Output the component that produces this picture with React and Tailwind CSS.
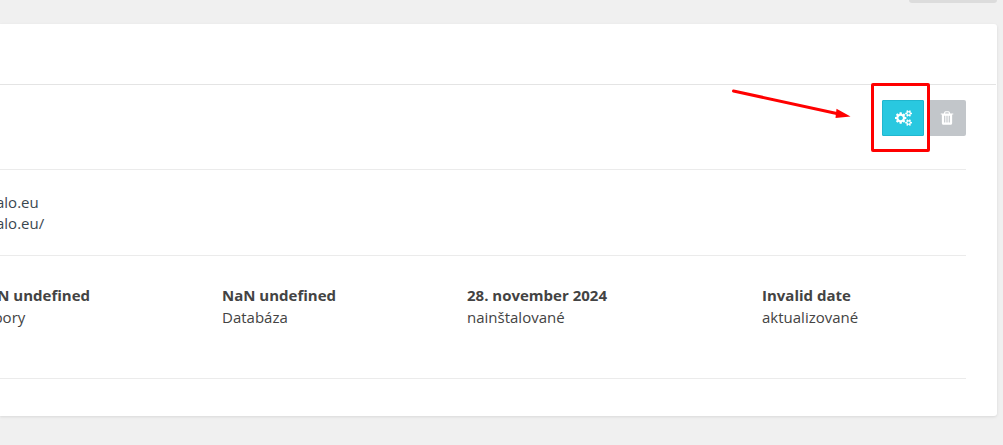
const STATS = [
  { value: "NaN undefined", label: "Súbory" },
  { value: "NaN undefined", label: "Databáza" },
  { value: "28. november 2024", label: "nainštalované" },
  { value: "Invalid date", label: "aktualizované" },
];

const SATELLITE =
  "q0 16-149 31-12 27-30 52 51 113 51 138 0 4-4 7-122 71-124 71-8 0-46-47t-52-68q-20 2-30 2t-30-2q-14 21-52 68t-46 47q-2 0-124-71-4-3-4-7 0-25 51-138-18-25-30-52-149-15-149-31v-140q0-16 149-31 13-29 30-52-51-113-51-138 0-4 4-7 4-2 35-20t59-34 30-16q8 0 46 46.5t52 67.5q20-2 30-2t30 2q51-71 92-112l6-2q4 0 124 70 4 3 4 7 0 25-51 138 17 23 30 52 149 15 149 31z";

function GearsIcon() {
  return (
    <svg viewBox="0 0 1920 1792" className="h-4 w-[17px]" fill="currentColor" aria-hidden="true">
      <path
        d={
          "M896 896q0-106-75-181t-181-75-181 75-75 181 75 181 181 75 181-75 75-181zm768 512q0-52-38-90t-90-38-90 38-38 90q0 53 37.5 90.5t90.5 37.5 90.5-37.5 37.5-90.5zm0-1024q0-52-38-90t-90-38-90 38-38 90q0 53 37.5 90.5t90.5 37.5 90.5-37.5 37.5-90.5zm-384 421v185q0 10-7 19.5t-16 10.5l-155 24q-11 35-32 76 34 48 90 115 7 11 7 20 0 12-7 19-23 30-82.5 89.5t-78.5 59.5q-11 0-21-7l-115-90q-37 19-77 31-11 108-23 155-7 24-30 24h-186q-11 0-20-7.5t-10-17.5l-23-153q-34-10-75-31l-118 89q-7 7-20 7-11 0-21-8-144-133-144-160 0-9 7-19 10-14 41-53t47-61q-23-44-35-82l-152-24q-10-1-17-9.5t-7-19.5v-185q0-10 7-19.5t16-10.5l155-24q11-35 32-76-34-48-90-115-7-11-7-20 0-12 7-20 22-30 82-89t79-59q11 0 21 7l115 90q34-18 77-32 11-108 23-154 7-24 30-24h186q11 0 20 7.5t10 17.5l23 153q34 10 75 31l118-89q8-7 20-7 11 0 21 8 144 133 144 160 0 8-7 19-12 16-42 54t-45 60q23 48 34 82l152 23q10 2 17 10.5t7 19.5zm640 533v140" +
          SATELLITE +
          "M1920 314v140" +
          SATELLITE
        }
      />
    </svg>
  );
}

function TrashIcon() {
  return (
    <svg viewBox="0 0 1792 1792" className="size-4" fill="currentColor" aria-hidden="true">
      <path d="M704 1376v-704q0-14-9-23t-23-9h-64q-14 0-23 9t-9 23v704q0 14 9 23t23 9h64q14 0 23-9t9-23zm256 0v-704q0-14-9-23t-23-9h-64q-14 0-23 9t-9 23v704q0 14 9 23t23 9h64q14 0 23-9t9-23zm256 0v-704q0-14-9-23t-23-9h-64q-14 0-23 9t-9 23v704q0 14 9 23t23 9h64q14 0 23-9t9-23zm-544-992h448l-48-117q-7-9-17-11h-317q-10 2-17 11zm928 32v64q0 14-9 23t-23 9h-96v948q0 83-47 143.500t-113 60.500h-832q-66 0-113-58.500t-47-141.500v-952h-96q-14 0-23-9t-9-23v-64q0-14 9-23t23-9h309l70-167q15-37 54-63t79-26h320q40 0 79 26t54 63l70 167h309q14 0 23 9t9 23z" />
    </svg>
  );
}

/* Callout: red frame around the settings button with an arrow pointing at it. */
function Callout() {
  return (
    <div className="pointer-events-none absolute -top-[17px] -left-[11px] h-[69px] w-[59px] rounded-[2px] border-3 border-[#ff0000]">
      <svg viewBox="0 0 120 32" className="absolute top-[3px] -left-[143px] h-8 w-[120px]" aria-hidden="true">
        <path d="M2.500 2L108 25" stroke="#ff0000" strokeWidth="3" strokeLinecap="round" />
        <path d="M105.500 19.800L119.500 27.500L104.500 29Z" fill="#ff0000" />
      </svg>
    </div>
  );
}

export default function App() {
  return (
    <div className="min-h-screen overflow-hidden bg-[#f0f0f0] pr-1.5 font-['Open_Sans',sans-serif] text-[15px] leading-[22px] text-[#434343]">
      <div className="flex h-6 justify-end">
        <div className="h-[3px] w-[88px] rounded-b-[3px] bg-[#dcdcdc]" />
      </div>

      <main className="rounded-r-[3px] bg-white pb-[37px] shadow-[0_1px_3px_rgba(0,0,0,0.1)]">
        <header className="mr-px h-[61px] border-b border-[#e4e4e4]" />

        <div className="mr-[31px]">
          <div className="flex justify-end gap-1 border-b border-[#ebebeb] pt-[15px] pb-[33px]">
            <div className="relative">
              <button
                type="button"
                aria-label="Nastavenia"
                className="flex h-9 w-[42px] items-center justify-center rounded-[1px] border border-[#20b7cf] bg-[#29c8e0] text-white"
              >
                <GearsIcon />
              </button>
              <Callout />
            </div>
            <button
              type="button"
              aria-label="Odstrániť"
              className="flex h-9 w-[38px] items-center justify-center rounded-[2px] bg-[#c2c6ca] text-white"
            >
              <TrashIcon />
            </button>
          </div>

          <div className="-ml-1 border-b border-[#ebebeb] pt-[22px] pb-[21px] leading-[21px] text-[#3b4750]">
            <p>alo.eu</p>
            <p>alo.eu/</p>
          </div>

          <dl className="-ml-6 grid grid-cols-[246fr_245fr_295fr_204fr] border-b border-[#ebebeb] pt-7 pb-[50px]">
            {STATS.map((stat) => (
              <div key={stat.label} className="flex flex-col-reverse">
                <dt>{stat.label}</dt>
                <dd className="font-bold">{stat.value}</dd>
              </div>
            ))}
          </dl>
        </div>
      </main>
    </div>
  );
}
